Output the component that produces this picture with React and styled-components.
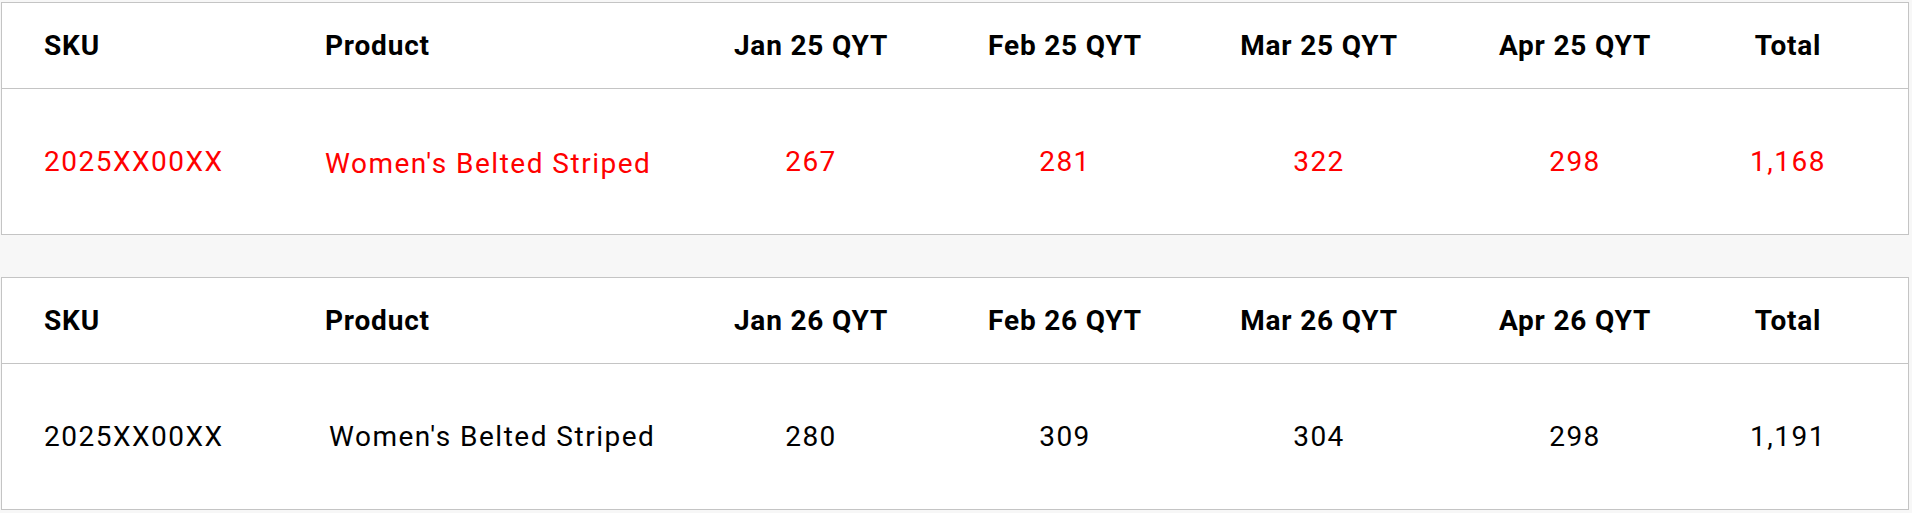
import React from 'react';
import styled, { createGlobalStyle } from 'styled-components';

const GlobalStyle = createGlobalStyle`
   html, body {
      margin: 0;
      padding: 0;
      background: #f7f7f7;
   }
`;

const columns = '281px 400px 256px 252px 256px 256px 170px 1fr';

// the product cell sits a little off in each table, as in the design
const tables = [
   {
      year: '25',
      color: '#ff0000',
      productShift: 0,
      productDrop: 4,
      row: {
         sku: '2025XX00XX',
         product: "Women's Belted Striped",
         months: ['267', '281', '322', '298'],
         total: '1,168',
      },
   },
   {
      year: '26',
      color: '#000000',
      productShift: 4,
      productDrop: 0,
      row: {
         sku: '2025XX00XX',
         product: "Women's Belted Striped",
         months: ['280', '309', '304', '298'],
         total: '1,191',
      },
   },
];

const months = ['Jan', 'Feb', 'Mar', 'Apr'];

const App = () => {
   return (
      <Page>
         <GlobalStyle />
         {tables.map((table) => (
            <Table key={table.year}>
               <HeaderRow>
                  <Cell>SKU</Cell>
                  <Cell>Product</Cell>
                  {months.map((m) => (
                     <Cell key={m} center>
                        {m} {table.year} QYT
                     </Cell>
                  ))}
                  <Cell center>Total</Cell>
                  <Cell />
               </HeaderRow>
               <BodyRow color={table.color}>
                  <Cell>{table.row.sku}</Cell>
                  <Cell shift={table.productShift} drop={table.productDrop}>
                     {table.row.product}
                  </Cell>
                  {table.row.months.map((v, i) => (
                     <Cell key={i} center>
                        {v}
                     </Cell>
                  ))}
                  <Cell center>{table.row.total}</Cell>
                  <Cell />
               </BodyRow>
            </Table>
         ))}
      </Page>
   );
};

const Page = styled.div`
   display: flex;
   flex-direction: column;
   gap: 42px;
   padding: 2px 3px 4px 1px;
   font-family: Roboto, 'Liberation Sans', sans-serif;
   font-size: 28px;
`;

const Table = styled.div`
   background: #ffffff;
   border: 1px solid #c4c4c4;
`;

const Row = styled.div`
   display: grid;
   grid-template-columns: ${columns};
   align-items: center;
`;

const HeaderRow = styled(Row)`
   height: 85px;
   border-bottom: 1px solid #c4c4c4;
   font-weight: 700;
   letter-spacing: 0.8px;
   color: #000000;
`;

const BodyRow = styled(Row)`
   height: 145px;
   font-weight: 400;
   letter-spacing: 1.5px;
   color: ${(props) => props.color};
`;

const Cell = styled.div`
   padding-left: ${(props) => (props.center ? 0 : 42 + (props.shift || 0))}px;
   padding-top: ${(props) => props.drop || 0}px;
   text-align: ${(props) => (props.center ? 'center' : 'left')};
   white-space: nowrap;
`;

export default App;
